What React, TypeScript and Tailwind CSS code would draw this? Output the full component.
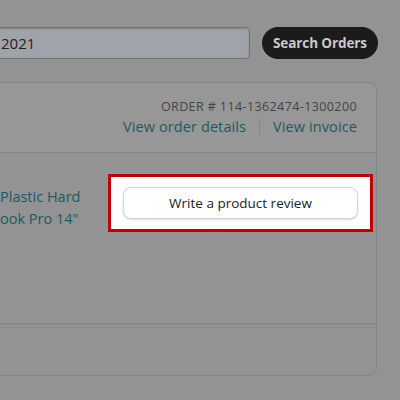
import React from "react";

export default function App() {
  return (
    <div
      className="w-[400px] h-[400px] overflow-hidden bg-[#939393] relative"
      style={{ fontFamily: '"Open Sans", "Noto Sans", Arial, sans-serif' }}
    >
      <div className="flex items-center pt-[27px] gap-[12px]">
        <div className="-ml-[12px] w-[262px] h-[32px] rounded-[4px] border border-[#6e7277] bg-[#a0a4aa] flex items-center pl-[12px] shadow-[inset_0_1px_2px_rgba(0,0,0,0.2)]">
          <span className="text-[15px] font-medium text-[#222]">2021</span>
        </div>
        <div className="w-[116px] h-[32px] rounded-full bg-[#1b1b1b] flex items-center justify-center">
          <span className="text-[13.5px] font-bold text-[#c9c9c9] tracking-[-0.1px]">Search Orders</span>
        </div>
      </div>

      <div className="mt-[23px] -ml-[10px] w-[387px] h-[294px] border border-[#858585] rounded-[8px] flex flex-col overflow-hidden">
        <div className="h-[70px] bg-[#979797] border-b border-[#858585] flex flex-col items-end pr-[19px] pt-[15px]">
          <div className="text-[12.5px] font-medium text-[#444] tracking-[0.4px] leading-[18px]">
            ORDER # 114-1362474-1300200
          </div>
          <div className="flex items-center text-[14.5px] font-medium text-[#1d5a62] leading-[20px] mt-[1px] tracking-[0.1px]">
            <span>View order details</span>
            <span className="mx-[13px] w-px h-[16px] bg-[#868686]"></span>
            <span>View invoice</span>
          </div>
        </div>
        <div className="h-[170px] flex pt-[21px]">
          <div className="w-[117px] pl-[9px] pt-[12px] text-[14.5px] font-medium leading-[22px] text-[#1d5a62] whitespace-nowrap overflow-hidden flex flex-col items-start">
            <span>Plastic Hard</span>
            <span>ook Pro 14"</span>
          </div>
          <div className="w-[265px] h-[58px] border-[3px] border-[#c00008] bg-white flex items-center pl-[12px]">
            <div className="w-[235px] h-[32px] rounded-[8px] border border-[#d5d5d5] bg-white shadow-[0_1px_2px_rgba(0,0,0,0.15)] flex items-center justify-center">
              <span className="text-[13.5px] font-medium text-[#222]">Write a product review</span>
            </div>
          </div>
        </div>
        <div className="border-b-2 border-[#878787]"></div>
        <div className="border-b border-[#8c8c8c] mt-[2px]"></div>
      </div>
    </div>
  );
}
